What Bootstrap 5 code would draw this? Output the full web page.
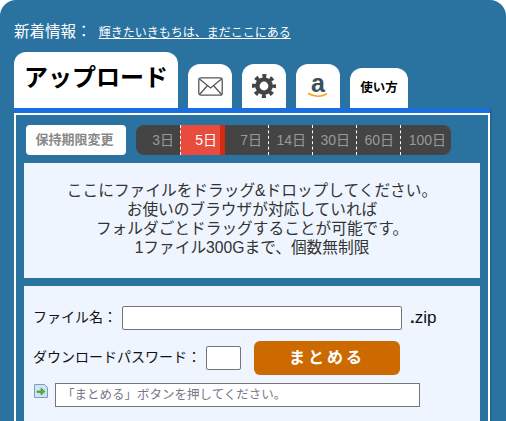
<!DOCTYPE html>
<html lang="ja">
<head>
    <meta charset="UTF-8">
    <meta name="viewport" content="width=device-width, initial-scale=1.0">
    <title>アップロード</title>
    <link href="https://cdn.jsdelivr.net/npm/bootstrap@5.3.0/dist/css/bootstrap.min.css" rel="stylesheet">
    <style>
        html, body {
            height: 421px;
            overflow: hidden;
            background: #fff;
        }
        body {
            font-family: "Liberation Sans", "Noto Sans CJK JP", sans-serif;
            color: #111;
        }
        .page-wrap {
            background: #2a72a0;
            border-radius: 16px 16px 0 0;
            height: 421px;
            overflow: hidden;
            padding: 20px 16px 0 14px;
        }
        .news-line {
            height: 24px;
            color: #fff;
            font-size: 15.5px;
            line-height: 24px;
            margin-bottom: 8px;
        }
        .news-line a {
            color: #fff;
            font-size: 12px;
            margin-left: 3px;
        }
        .tab-row {
            height: 56px;
            gap: 10px;
        }
        .tab-item {
            background: #fff;
            border-radius: 12px 12px 0 0;
            color: #000;
        }
        .tab-main {
            width: 164px;
            height: 56px;
            font-size: 24px;
            font-weight: 700;
            padding-bottom: 5px;
        }
        .tab-icon {
            width: 44px;
            height: 44px;
        }
        .tab-help {
            width: 58px;
            height: 40px;
            font-size: 12.5px;
            font-weight: 700;
        }
        .panel-box {
            border-top: 5px solid #1a6fe0;
            height: 313px;
            box-shadow: 2px 0 0 #25668f;
        }
        .panel-inner {
            border: 2px solid #fff;
            border-bottom: 0;
            height: 100%;
            overflow: hidden;
            padding: 10px 8px 0;
        }
        .keep-btn {
            width: 100px;
            height: 30px;
            background: #fff;
            border-radius: 4px;
            color: #888;
            font-size: 13px;
            font-weight: 700;
            padding-right: 3px;
            margin: 0 10px 0 2px;
        }
        .day-bar {
            background: #444;
            border-radius: 8px;
            height: 30px;
            width: 315px;
        }
        .day-cell {
            width: 44px;
            height: 30px;
            color: #999;
            font-size: 14px;
            border-left: 1px dashed #fff;
            padding-right: 6px;
        }
        .day-cell.day-first {
            border-left: 0;
        }
        .day-cell.day-on {
            width: 45px;
            color: #fff;
            background: #e74c3c;
            border-right: 5px solid #d42a12;
            padding-right: 3px;
        }
        .day-cell.day-after {
            border-left: 0;
            width: 43px;
        }
        .day-cell.day-last {
            width: 51px;
            padding-right: 5px;
        }
        .drop-box {
            background: #eef5ff;
            height: 115px;
            margin-top: 8px;
            font-size: 15.7px;
            line-height: 19px;
            color: #333;
            padding-top: 18px;
        }
        .form-box {
            background: #eef5ff;
            height: 135px;
            margin-top: 8px;
            padding: 19px 9px 0;
            font-size: 14px;
        }
        .form-box input {
            border: 1px solid #767676;
            border-radius: 2px;
            background: #fff;
            padding: 0;
        }
        .name-input {
            width: 280px;
            height: 24px;
            margin-left: 5px;
        }
        .zip-label {
            margin-left: 8px;
            font-size: 17px;
        }
        .pass-input {
            width: 35px;
            height: 24px;
            margin-left: 5px;
        }
        .form-row2 {
            margin-top: 10px;
        }
        .join-btn {
            width: 146px;
            height: 34px;
            margin-left: 13px;
            background: #cc6a00;
            border: 0;
            border-radius: 6px;
            color: #fff;
            font-size: 16px;
            font-weight: 700;
            letter-spacing: 3px;
            padding: 0;
        }
        .form-row3 {
            margin-top: 8px;
        }
        .status-input {
            width: 365px;
            height: 24px;
            margin-left: 6px;
            border-radius: 0 !important;
            padding-left: 6px !important;
            font-size: 12.5px;
            color: #778;
        }
        .status-input::placeholder {
            color: #778;
        }
    </style>
</head>
<body>
    <div class="page-wrap">
        <div class="news-line">新着情報： <a href="#">輝きたいきもちは、まだここにある</a></div>

        <div class="tab-row d-flex align-items-end">
            <div class="tab-item tab-main d-flex align-items-center justify-content-center">アップロード</div>
            <div class="tab-item tab-icon d-flex align-items-center justify-content-center">
                <svg width="25" height="19" viewBox="0 0 25 19" fill="none" stroke="#555" stroke-width="1.3">
                    <rect x=".8" y=".8" width="23.4" height="17.4" rx="2"/>
                    <path d="M1.500 2 12.500 11 23.500 2M1.500 17.500 9.500 8.500M23.500 17.500 15.500 8.500"/>
                </svg>
            </div>
            <div class="tab-item tab-icon d-flex align-items-center justify-content-center">
                <svg width="24" height="24" viewBox="0 0 24 24" fill="none" stroke="#444">
                    <circle cx="12" cy="12" r="6.6" stroke-width="4.4"/>
                    <circle cx="12" cy="12" r="10" stroke-width="4" stroke-dasharray="3.93 3.93" stroke-dashoffset="1.96"/>
                </svg>
            </div>
            <div class="tab-item tab-icon d-flex align-items-center justify-content-center">
                <svg width="30" height="40" viewBox="0 0 30 40" fill="none">
                    <text x="15" y="26" text-anchor="middle" font-family="Liberation Sans" font-weight="700" font-size="25" fill="#3d4f5c">a</text>
                    <path d="M5.500 27.500c5.500 3.500 13 3.500 18 .5" stroke="#f5a623" stroke-width="1.6" stroke-linecap="round"/>
                </svg>
            </div>
            <div class="tab-item tab-help d-flex align-items-center justify-content-center">使い方</div>
        </div>

        <div class="panel-box">
            <div class="panel-inner">
                <div class="d-flex">
                    <div class="keep-btn d-flex align-items-center justify-content-center">保持期限変更</div>
                    <div class="day-bar d-flex">
                        <div class="day-cell day-first d-flex align-items-center justify-content-end">3日</div>
                        <div class="day-cell day-on d-flex align-items-center justify-content-end">5日</div>
                        <div class="day-cell day-after d-flex align-items-center justify-content-end">7日</div>
                        <div class="day-cell d-flex align-items-center justify-content-end">14日</div>
                        <div class="day-cell d-flex align-items-center justify-content-end">30日</div>
                        <div class="day-cell d-flex align-items-center justify-content-end">60日</div>
                        <div class="day-cell day-last d-flex align-items-center justify-content-end">100日</div>
                    </div>
                </div>

                <div class="drop-box text-center">
                    ここにファイルをドラッグ&amp;ドロップしてください。<br>
                    お使いのブラウザが対応していれば<br>
                    フォルダごとドラッグすることが可能です。<br>
                    1ファイル300Gまで、個数無制限
                </div>

                <div class="form-box">
                    <div class="d-flex align-items-center">
                        <span>ファイル名：</span>
                        <input type="text" class="name-input">
                        <span class="zip-label"><b>.</b>zip</span>
                    </div>
                    <div class="form-row2 d-flex align-items-center">
                        <span>ダウンロードパスワード：</span>
                        <input type="text" class="pass-input">
                        <button type="button" class="join-btn">まとめる</button>
                    </div>
                    <div class="form-row3 d-flex align-items-start">
                        <svg width="16" height="16" viewBox="0 0 16 16">
                            <path d="M1.500 1.500h10l3 3v10h-13z" fill="#cfe3f7" stroke="#7f9db9"/>
                            <path d="M4 8h4V5l4 3.500L8 12V9.500H4z" fill="#5cb531" stroke="#3d8a1c" stroke-width=".6"/>
                        </svg>
                        <input type="text" class="status-input" placeholder="「まとめる」ボタンを押してください。">
                    </div>
                </div>
            </div>
        </div>
    </div>

    <script src="https://cdn.jsdelivr.net/npm/bootstrap@5.3.0/dist/js/bootstrap.bundle.min.js"></script>
</body>
</html>
